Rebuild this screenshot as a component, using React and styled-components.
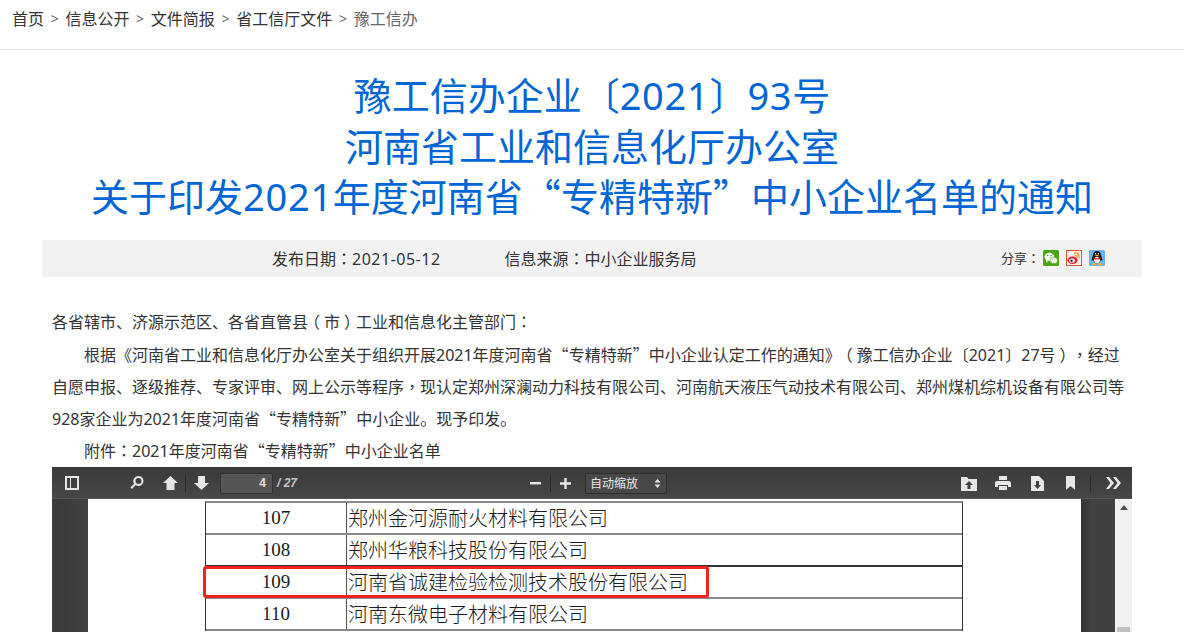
import React from 'react'
import styled, { createGlobalStyle } from 'styled-components'

const GlobalStyle = createGlobalStyle`
  html, body { margin: 0; padding: 0; background: #fff; }
  body {
    font-family: "Noto Sans", "Noto Sans CJK SC", sans-serif;
    color: #333;
    text-spacing-trim: space-all;
  }
`

const Page = styled.div`
  width: 1184px;
  height: 632px;
  overflow: hidden;
`

const Crumbs = styled.nav`
  height: 50px;
  box-sizing: border-box;
  padding: 7px 12px 0;
  display: flex;
  gap: 6.7px;
  font-size: 16px;
  line-height: 24px;
  border-bottom: 1px solid #e6e6e6;
`

const Crumb = styled.span`
  color: ${p => (p.$last ? '#666' : '#333')};
`

const Sep = styled.span`
  color: #666;
  font-size: 14px;
`

const Title = styled.h1`
  margin: 20px 0 18.4px;
  font-size: 38px;
  line-height: 50.54px;
  font-weight: 400;
  color: #0066d6;
  text-align: center;
`

const TitleNum = styled.span`
  letter-spacing: 0.7px;
`

const Meta = styled.div`
  margin: 0 42px;
  height: 37px;
  box-sizing: border-box;
  background: #f2f2f2;
  display: flex;
  align-items: center;
  padding: 0 0 2px 230px;
  font-size: 16px;
  color: #333;
`

const MetaItem = styled.span`
  margin-right: 64px;
`

const MetaDate = styled.span`
  letter-spacing: 0.5px;
`

const Share = styled.div`
  margin-left: auto;
  margin-right: 37px;
  display: flex;
  align-items: center;
  gap: 7px;
  font-size: 13px;
`

const ShareLabel = styled.span`
  margin-right: -4px;
`

const Article = styled.div`
  margin: 29.4px 52px 0;
  font-size: 16px;
  line-height: 32.2px;
  color: #333;
`

const Para = styled.p`
  margin: 0;
  text-indent: ${p => (p.$indent ? '32px' : '0')};
`

const Mid = styled.span`
  font-family: "Noto Sans CJK TC", sans-serif;
  line-height: 0;
`

const Paren = styled(Mid)`
  position: relative;
  left: ${p => p.$dx}em;
`

const Quote = styled.span`
  font-family: "Noto Sans CJK SC", sans-serif;
  line-height: 0;
`

const Viewer = styled.div`
  margin: 0 52px;
  height: 165px;
  background: #404040;
  display: flex;
  flex-direction: column;
`

const Toolbar = styled.div`
  height: 32px;
  flex: none;
  display: flex;
  align-items: center;
  background: linear-gradient(#3a3a3a, #474747);
  box-shadow: inset 0 -1px 0 #555;
  color: #e6e6e6;
`

const ToolGroup = styled.div`
  display: flex;
  align-items: center;
  margin-left: ${p => p.$ml}px;
`

const Divider = styled.i`
  width: 1px;
  height: 17px;
  background: #2c2c2c;
  margin: 0 ${p => p.$mx}px;
`

const PageInput = styled.div`
  width: 53px;
  height: 21px;
  box-sizing: border-box;
  margin-left: 11px;
  padding-right: 6px;
  background: #555;
  border: 1px solid #333;
  border-radius: 2px;
  color: #e0e0e0;
  font-family: "Liberation Sans", sans-serif;
  font-size: 12px;
  font-weight: 700;
  line-height: 19px;
  text-align: right;
`

const PageTotal = styled.span`
  margin-left: 4px;
  font-family: "Liberation Sans", sans-serif;
  font-size: 12px;
  font-style: italic;
  font-weight: 700;
  color: #c4c4c4;
`

const ZoomSelect = styled.div`
  width: 82px;
  height: 21px;
  box-sizing: border-box;
  margin-left: 14px;
  padding: 0 5px 0 4px;
  display: flex;
  align-items: center;
  justify-content: space-between;
  background: #484848;
  border: 1px solid #2f2f2f;
  border-radius: 2px;
  color: #e6e6e6;
  font-size: 12px;
`

const ViewerBody = styled.div`
  flex: 1;
  min-height: 0;
  display: flex;
  overflow: hidden;
`

const Gutter = styled.div`
  width: 36px;
  flex: none;
  background: linear-gradient(90deg, #3a3a3a, #414141);
`

const SheetPage = styled.div`
  width: 993px;
  flex: none;
  background: #fff;
  padding-left: 117px;
  box-sizing: border-box;
  position: relative;
  overflow: hidden;
`

const SideGutter = styled.div`
  flex: 1;
  background: linear-gradient(90deg, #333, #414141 30%);
`

const Scrollbar = styled.div`
  width: 17px;
  flex: none;
  background: #f0f0f0;
  position: relative;
  display: flex;
  justify-content: center;
`

const ScrollArrow = styled.i`
  margin-top: 6px;
  width: 0;
  height: 0;
  border-left: 4px solid transparent;
  border-right: 4px solid transparent;
  border-bottom: 5px solid #505050;
`

const ScrollThumb = styled.i`
  position: absolute;
  left: 2px;
  top: 128px;
  width: 13px;
  height: 10px;
  background: #c0c0c0;
`

const Table = styled.div`
  width: 758px;
  margin-top: 2px;
  box-sizing: border-box;
  border-left: 1px solid #333;
  border-right: 1px solid #333;
  border-top: 2px solid #8a8a8a;
`

const Row = styled.div`
  height: 30px;
  display: grid;
  grid-template-columns: 141px 1fr;
  border-bottom: 2px solid ${p => (p.$thin ? '#333' : '#8a8a8a')};
  line-height: 30px;
  color: #1a1a1a;
`

const NumCell = styled.div`
  border-right: 1px solid #555;
  text-align: center;
  font-family: "Liberation Serif", serif;
  font-size: 19px;
`

const NameCell = styled.div`
  padding-left: 1px;
  font-family: "Noto Sans CJK SC", sans-serif;
  font-size: 20px;
  font-weight: 300;
  white-space: nowrap;
`

const Highlight = styled.div`
  position: absolute;
  left: 115px;
  top: 67px;
  width: 506px;
  height: 32px;
  box-sizing: border-box;
  border: 3px solid #f5221b;
  border-radius: 3px;
`

const Ico = ({ w = 16, h = 16, children, ml = 0 }) => (
  <svg width={w} height={h} viewBox={`0 0 ${w} ${h}`} fill="#e6e6e6" style={{ marginLeft: ml, flex: 'none' }}>
    {children}
  </svg>
)

// the original font centres ：，（） and sets the quotes full width
const zh = text =>
  text.split(/([：，（）“”])/).map((part, i) => {
    if (part === '（') return <Paren key={i} $dx={-0.25}>{part}</Paren>
    if (part === '）') return <Paren key={i} $dx={0.25}>{part}</Paren>
    if (part === '：' || part === '，') return <Mid key={i}>{part}</Mid>
    if (part === '“' || part === '”') return <Quote key={i}>{part}</Quote>
    return part
  })

const WeChat = () => (
  <svg width="16" height="16" viewBox="0 0 16 16">
    <rect width="16" height="16" rx="1.5" fill="#46a80f" />
    <ellipse cx="6.3" cy="6.8" rx="4.8" ry="4" fill="#fff" />
    <path d="M3.5 9.5 3 12.5l2.8-1.8z" fill="#fff" />
    <ellipse cx="10.8" cy="10.4" rx="3.8" ry="3.2" fill="#fff" stroke="#46a80f" strokeWidth=".7" />
    <circle cx="4.8" cy="5.6" r=".8" fill="#46a80f" />
    <circle cx="7.8" cy="5.6" r=".8" fill="#46a80f" />
    <circle cx="9.6" cy="9.7" r=".5" fill="#46a80f" />
    <circle cx="12" cy="9.7" r=".5" fill="#46a80f" />
  </svg>
)

const Weibo = () => (
  <svg width="16" height="16" viewBox="0 0 16 16">
    <rect x=".5" y=".5" width="15" height="15" fill="#fdf3ec" stroke="#e8502a" />
    <ellipse cx="6.5" cy="10.3" rx="5" ry="3.8" fill="#dd2a2a" />
    <ellipse cx="6" cy="10.6" rx="2.8" ry="2.2" fill="#fff" />
    <circle cx="5.6" cy="10.8" r="1.2" fill="#222" />
    <path d="M8 3c3.2-.6 5.5 1.7 5 4.8" fill="none" stroke="#f08a1d" strokeWidth="1.3" />
    <path d="M8.6 5.3c1.7-.3 2.8.9 2.5 2.5" fill="none" stroke="#f08a1d" strokeWidth="1.1" />
  </svg>
)

const QQ = () => (
  <svg width="16" height="16" viewBox="0 0 16 16">
    <rect width="16" height="16" rx="1.5" fill="#69b4ec" />
    <path d="M8 1c2.6 0 3.9 2 4 4.5.8 1.6 1.6 3.4 1.2 5-.4.5-1-.2-1.4-.7C11.6 12 10 13.5 8 13.5S4.4 12 4.2 9.8c-.4.5-1 1.2-1.4.7C2.4 8.9 3.2 7.1 4 5.5 4.1 3 5.4 1 8 1z" fill="#141414" />
    <ellipse cx="8" cy="10.2" rx="3" ry="3.1" fill="#fff" />
    <path d="M4.2 7.4c2.4 1 5.2 1 7.6 0l-.2 1.5c-2.2.9-5 .9-7.2 0z" fill="#d8261c" />
    <ellipse cx="8" cy="5.6" rx="1.8" ry=".8" fill="#f2b01e" />
    <circle cx="6.6" cy="3.7" r=".7" fill="#fff" />
    <circle cx="9.4" cy="3.7" r=".7" fill="#fff" />
    <ellipse cx="5.2" cy="14.3" rx="2.4" ry="1.1" fill="#f2b01e" />
    <ellipse cx="10.8" cy="14.3" rx="2.4" ry="1.1" fill="#f2b01e" />
  </svg>
)

const rows = [
  { num: 107, name: '郑州金河源耐火材料有限公司' },
  { num: 108, name: '郑州华粮科技股份有限公司', thin: true },
  { num: 109, name: '河南省诚建检验检测技术股份有限公司' },
  { num: 110, name: '河南东微电子材料有限公司' },
]

export default function App() {
  return (
    <Page>
      <GlobalStyle />
      <Crumbs>
        <Crumb>首页</Crumb><Sep>&gt;</Sep>
        <Crumb>信息公开</Crumb><Sep>&gt;</Sep>
        <Crumb>文件简报</Crumb><Sep>&gt;</Sep>
        <Crumb>省工信厅文件</Crumb><Sep>&gt;</Sep>
        <Crumb $last>豫工信办</Crumb>
      </Crumbs>

      <Title>
        豫工信办企业〔<TitleNum>2021</TitleNum>〕<TitleNum>93</TitleNum>号<br />
        河南省工业和信息化厅办公室<br />
        关于印发<TitleNum>2021</TitleNum>年度河南省{zh('“专精特新”')}中小企业名单的通知
      </Title>

      <Meta>
        <MetaItem>{zh('发布日期：')}<MetaDate>2021-05-12</MetaDate></MetaItem>
        <MetaItem>{zh('信息来源：中小企业服务局')}</MetaItem>
        <Share>
          <ShareLabel>{zh('分享：')}</ShareLabel>
          <WeChat />
          <Weibo />
          <QQ />
        </Share>
      </Meta>

      <Article>
        <Para>{zh('各省辖市、济源示范区、各省直管县（市）工业和信息化主管部门：')}</Para>
        <Para $indent>{zh('根据《河南省工业和信息化厅办公室关于组织开展2021年度河南省“专精特新”中小企业认定工作的通知》（豫工信办企业〔2021〕27号），经过自愿申报、逐级推荐、专家评审、网上公示等程序，现认定郑州深澜动力科技有限公司、河南航天液压气动技术有限公司、郑州煤机综机设备有限公司等928家企业为2021年度河南省“专精特新”中小企业。现予印发。')}</Para>
        <Para $indent>{zh('附件：2021年度河南省“专精特新”中小企业名单')}</Para>
      </Article>

      <Viewer>
        <Toolbar>
          <ToolGroup $ml={13}>
            <Ico w={14} h={14}>
              <path fillRule="evenodd" d="M0 0h14v14H0zM2 2v10h3V2zm4 0v10h6V2z" />
            </Ico>
            <Ico w={14} h={14} ml={51}>
              <path fillRule="evenodd" d="M8.5 0a5 5 0 1 1-2.900 9.100L2 13l-1.600-1.500 3.700-3.800A5 5 0 0 1 8.500 0zm0 2a3 3 0 1 0 0 6 3 3 0 0 0 0-6z" />
            </Ico>
            <Ico w={15} h={14} ml={19}>
              <path d="M7.500 0 15 7h-3.500v7h-8V7H0z" />
            </Ico>
            <Divider $mx={7} />
            <Ico w={15} h={14} ml={1}>
              <path d="M4 0h7v7h4l-7.500 7L0 7h4z" />
            </Ico>
            <PageInput>4</PageInput>
            <PageTotal>/ 27</PageTotal>
          </ToolGroup>
          <ToolGroup $ml={233}>
            <Ico w={11} h={11}>
              <rect y="4" width="11" height="2.400" />
            </Ico>
            <Divider $mx={9} />
            <Ico w={11} h={11}>
              <path d="M4.300 0h2.400v4.300H11v2.400H6.700V11H4.300V6.700H0V4.300h4.300z" />
            </Ico>
            <ZoomSelect>
              自动缩放
              <Ico w={7} h={11}>
                <path d="M3.500 1 6.500 4.400h-6zM3.500 10 .5 6.600h6z" />
              </Ico>
            </ZoomSelect>
          </ToolGroup>
          <ToolGroup $ml={294}>
            <Ico w={16} h={15}>
              <path fillRule="evenodd" d="M0 1h6l1.500 2H16v12H0zm8 4-4 4h2.500v4h3V9H12z" />
            </Ico>
            <Ico w={16} h={14} ml={18}>
              <path fillRule="evenodd" d="M4 0h8v4H4zM2 5h12a2 2 0 0 1 2 2v4h-3V9H3v2H0V7a2 2 0 0 1 2-2zm2 5h8v4H4z" />
            </Ico>
            <Ico w={13} h={15} ml={20}>
              <path fillRule="evenodd" d="M0 0h8l5 5v10H0zm5 5v4H3l3.500 4L10 9H8V5z" />
            </Ico>
            <Ico w={9} h={14} ml={22}>
              <path d="M0 0h9v14L4.500 10 0 14z" />
            </Ico>
            <Divider $mx={15} />
            <Ico w={15} h={12}>
              <path d="M0 0h3l5 6-5 6H0l4.500-6zM7 0h3l5 6-5 6H7l4.500-6z" />
            </Ico>
          </ToolGroup>
        </Toolbar>
        <ViewerBody>
          <Gutter />
          <SheetPage>
            <Table>
              {rows.map(r => (
                <Row key={r.num} $thin={r.thin}>
                  <NumCell>{r.num}</NumCell>
                  <NameCell>{r.name}</NameCell>
                </Row>
              ))}
            </Table>
            <Highlight />
          </SheetPage>
          <SideGutter />
          <Scrollbar>
            <ScrollArrow />
            <ScrollThumb />
          </Scrollbar>
        </ViewerBody>
      </Viewer>
    </Page>
  )
}
